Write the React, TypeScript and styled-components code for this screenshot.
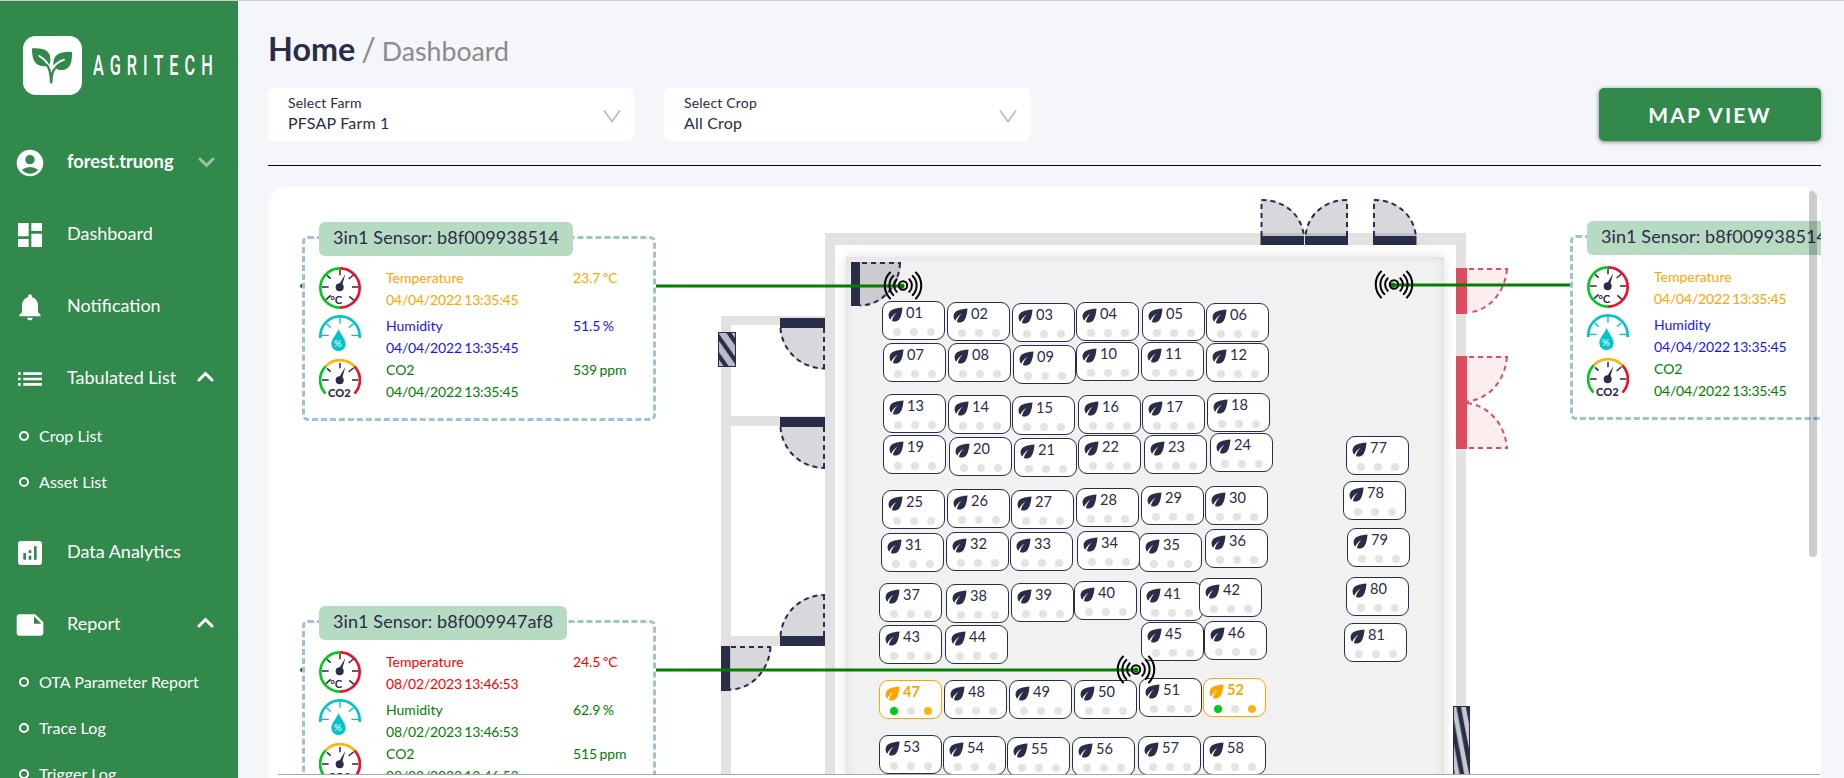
import React from "react";
import styled, { createGlobalStyle } from "styled-components";
import {
  MdAccountCircle,
  MdAnalytics,
  MdDashboard,
  MdEco,
  MdList,
  MdNote,
  MdNotifications,
} from "react-icons/md";

const green = "#31894b";
const navy = "#292d47";
const red = "#de4d5f";

const GlobalStyle = createGlobalStyle`
  *, *::before, *::after { box-sizing: border-box; }
  body {
    margin: 0;
    background: #f4f6fa;
    color: ${navy};
    font-family: Lato, "Liberation Sans", sans-serif;
    overflow: hidden;
  }
`;

const Page = styled.div`
  display: flex;
  height: 778px;
  border-top: 1px solid #cccccc;
  overflow: hidden;
`;

/* ---------- sidebar ---------- */

const Sidebar = styled.nav`
  flex: 0 0 238px;
  background: ${green};
  color: #fff;
  overflow: hidden;
`;

const Brand = styled.div`
  display: flex;
  align-items: center;
  height: 124px;
  padding: 5px 0 0 23px;
  gap: 11px;
`;

const BrandName = styled.span`
  width: 125px;
  font: 500 28px/32px Roboto, sans-serif;
  letter-spacing: 10.4px;
  white-space: nowrap;
  transform: scaleX(0.58);
  transform-origin: left center;
`;

const NavItem = styled.div<{ $bold?: boolean }>`
  display: flex;
  align-items: center;
  height: 72px;
  padding: 0 23px 0 14px;
  font-size: ${(p) => (p.$bold ? "18.25px" : "18px")};
  font-weight: ${(p) => (p.$bold ? 700 : 400)};

  > svg:first-child {
    flex: none;
    margin: 4px 21px 0 0;
  }
`;

const NavLabel = styled.span`
  flex: 1;
  white-space: nowrap;
`;

const NavChevron = styled.svg<{ $up?: boolean }>`
  margin: ${(p) => (p.$up ? "-2px 1px 0 0" : "2px 0 0 0")};
`;

const SubList = styled.div`
  padding-bottom: 10px;
`;

const SubItem = styled.div`
  display: flex;
  align-items: center;
  gap: 10px;
  height: 46px;
  padding: 0 0 2px 19px;
  font-size: 16.1px;
  white-space: nowrap;
`;

const Bullet = styled.span`
  width: 10px;
  height: 10px;
  margin-top: 2px;
  border: 2.5px solid #fff;
  border-radius: 50%;
`;

/* ---------- main column ---------- */

const Main = styled.main`
  flex: 1;
  min-width: 0;
  display: flex;
  flex-direction: column;
  padding: 0 23px 0 30px;
`;

const Title = styled.h1`
  display: flex;
  align-items: baseline;
  margin: 0;
  height: 87px;
  padding-top: 28px;
  font-size: 32.3px;
  line-height: 40px;
  font-weight: 700;
`;

const Slash = styled.span`
  margin: 0 6px 0 6px;
  font-weight: 400;
  color: #8b8b8b;
`;

const Crumb = styled.span`
  font-size: 26.700px;
  font-weight: 400;
  color: #8b8b8b;
`;

const Toolbar = styled.div`
  display: flex;
  gap: 30px;
  height: 78px;
  padding-bottom: 24px;
  border-bottom: 1px solid #000;
`;

const Select = styled.div`
  display: flex;
  align-items: center;
  justify-content: space-between;
  width: 366px;
  padding: 0 13px 0 20px;
  border-radius: 6px;
  background: #fff;
`;

const SelectText = styled.div`
  display: flex;
  flex-direction: column;
  padding-bottom: 3px;
  letter-spacing: 0.2px;
`;

const SelectLabel = styled.span`
  font-size: 14px;
  line-height: 20px;
`;

const SelectValue = styled.span`
  font-size: 16px;
  line-height: 20px;
`;

const MapButton = styled.button`
  width: 222px;
  margin-left: auto;
  padding: 0;
  border: 0;
  border-radius: 5px;
  background: ${green};
  color: #fff;
  font: 700 21px/53px Lato, sans-serif;
  letter-spacing: 2.2px;
  box-shadow: 0 1px 4px rgba(0, 0, 0, 0.5);
`;

const Panel = styled.section`
  flex: 1;
  min-height: 0;
  display: flex;
  flex-direction: column;
  margin-top: 20px;
  padding-bottom: 3px;
  border-radius: 22px 22px 0 0;
  background: #fff;
  overflow: hidden;
  position: relative;
`;

const MapView = styled.div`
  position: relative;
  flex: 1;
  overflow: hidden;
`;

const BottomRule = styled.div`
  height: 1px;
  margin: 0 1px 0 10px;
  background: #a8a8a8;
`;

const ScrollThumb = styled.div`
  position: absolute;
  top: 4px;
  right: 4px;
  width: 8px;
  height: 367px;
  border-radius: 4px;
  background: rgba(0, 0, 0, 0.2);
`;

const Layer = styled.svg`
  position: absolute;
  inset: 0;
`;

const Room = styled.div`
  position: absolute;
  left: 578px;
  top: 71px;
  width: 598px;
  height: 700px;
  background: #f1f1f1;
  box-shadow: 0 0 12px rgba(0, 0, 0, 0.12), inset 0 0 10px rgba(0, 0, 0, 0.1);
`;

const Pin = styled.div<{ $x: number; $y: number; $alert?: boolean }>`
  position: absolute;
  left: ${(p) => p.$x}px;
  top: ${(p) => p.$y}px;
  width: 63px;
  height: 39px;
  padding: 2px 0 0 2px;
  border: 1px solid ${(p) => (p.$alert ? "#ffa500" : navy)};
  border-radius: 9px;
  background: #fff;
  color: ${(p) => (p.$alert ? "#ffa500" : navy)};
  font-size: 14.600px;
  font-weight: ${(p) => (p.$alert ? 700 : 400)};
`;

const PinHead = styled.div`
  display: flex;
  align-items: center;
  height: 20px;
  line-height: 16px;

  > svg {
    margin: 1px 0 0 0;
  }
`;

const PinNumber = styled.span`
  height: 19px;
`;

const Dots = styled.div`
  display: flex;
  gap: 9px;
  padding: 4px 0 0 8px;
`;

const Dot = styled.span<{ $color: string }>`
  width: 8px;
  height: 8px;
  border-radius: 50%;
  background: ${(p) => p.$color};
`;

/* ---------- sensor card ---------- */

const Card = styled.article<{ $x: number; $y: number }>`
  position: absolute;
  left: ${(p) => p.$x}px;
  top: ${(p) => p.$y}px;
  width: 354px;
  height: 185px;
  padding: 28px 0 0 14px;
  border: 3px dashed #9fc1d1;
  border-radius: 6px;
  background: #fff;
`;

const Badge = styled.div`
  position: absolute;
  top: -17px;
  left: 14px;
  height: 34px;
  padding: 0 14px;
  border-radius: 6px;
  background: #b7dac2;
  font-size: 18px;
  letter-spacing: 0.1px;
  line-height: 30px;
  white-space: nowrap;
`;

const Reading = styled.div<{ $color: string; $height: number }>`
  display: grid;
  grid-template-columns: 67px 187px auto;
  align-items: start;
  height: ${(p) => p.$height}px;
  color: ${(p) => p.$color};
  font-size: 14px;
  line-height: 22px;
  word-spacing: -1px;
  white-space: nowrap;
`;

const ReadingName = styled.div`
  display: flex;
  flex-direction: column;
`;

const ReadingTime = styled.span`
  letter-spacing: -0.18px;
`;

const ReadingValue = styled.span`
  letter-spacing: -0.12px;
`;

/* ---------- drawings ---------- */

function Logo() {
  return (
    <svg width="59" height="59" viewBox="69 108 177 177">
      <rect x="69" y="108" width="177" height="177" rx="38" fill="#fff" />
      <g fill={green}>
        <path d="M96 145C132 142 153 152 151 182C150 190 149 196 145 198C108 203 96 186 96 145Z" />
        <path d="M216 156C184 153 160 163 160 190C160 208 176 213 193 209C214 203 216 182 216 156Z" />
      </g>
      <g fill="none" strokeLinecap="round">
        <path d="M118 168Q142 182 153 210M192 179Q167 188 157 207" stroke="#fff" strokeWidth="6" />
        <path d="M141 196Q152 208 153 247M164 207Q155 214 154 247" stroke={green} strokeWidth="7" />
      </g>
    </svg>
  );
}

function Chevron({ up }: { up?: boolean }) {
  return (
    <NavChevron $up={up} width="17" height="11" viewBox="0 0 17 11">
      <path
        d={up ? "M2 9L8.5 2.5L15 9" : "M2 2L8.5 8.5L15 2"}
        fill="none"
        stroke="#fff"
        strokeOpacity={up ? 1 : 0.5}
        strokeWidth="3"
        strokeLinecap="round"
      />
    </NavChevron>
  );
}

const ArrowDrawing = styled.svg`
  margin-top: 3px;
`;

function SelectArrow() {
  return (
    <ArrowDrawing width="18" height="13" viewBox="0 0 18 13">
      <path d="M1 0.5L9 11.5L17 0.5" fill="none" stroke="#bdbdbd" strokeWidth="1.8" />
    </ArrowDrawing>
  );
}

function GaugeTicks() {
  return (
    <g>
      <path
        d="M150 210V226M96 261H116M186 261H205M111 226L122 236M190 225L176 237"
        stroke={navy}
        strokeWidth="4.5"
        fill="none"
      />
      <circle cx="149" cy="262" r="12" fill={navy} />
      <path d="M144 259L166 222L154 264Z" fill={navy} />
    </g>
  );
}

function TemperatureIcon() {
  return (
    <svg width="42" height="42" viewBox="87 201 126 126">
      <path d="M150 205A59 59 0 0 0 150 323" fill="none" stroke="#00c81e" strokeWidth="8" />
      <path d="M150 205A59 59 0 0 1 150 323" fill="none" stroke="#f00f28" strokeWidth="8" />
      <GaugeTicks />
      <path d="M108 299L122 286M178 289L192 301" stroke={navy} strokeWidth="4.5" />
      <text x="121" y="311" fontSize="34" fontWeight="700" fill={navy}>
        °
      </text>
      <text x="134" y="311" fontSize="34" fontWeight="700" fill={navy}>
        C
      </text>
    </svg>
  );
}

function HumidityIcon() {
  return (
    <svg width="42" height="37" viewBox="87 345 126 111">
      <g fill="none" stroke="#00c4c8">
        <path d="M91 414V408A59 59 0 0 1 209 408V414" strokeWidth="8" />
        <path d="M150 352V371M94 406H116M184 406H206M110 371L122 383M190 371L177 383" strokeWidth="4" />
      </g>
      <path d="M146 387C153 405 167 418 167 432A21.500 21.500 0 0 1 124 432C124 418 138 405 146 387Z" fill="#00c4c8" />
      <text x="131" y="441" fontSize="30" fill="#fff">
        %
      </text>
    </svg>
  );
}

function Co2Icon() {
  return (
    <svg width="42" height="40" viewBox="87 477 126 120">
      <g fill="none" strokeWidth="8" strokeLinecap="round">
        <path d="M104 578A59 59 0 0 1 107 499" stroke="#00c81e" />
        <path d="M196 578A59 59 0 0 0 193 499" stroke="#f00f28" />
        <path d="M107 499A59 59 0 0 1 193 499" stroke="#fab414" strokeLinecap="butt" />
      </g>
      <g transform="translate(0 279)">
        <GaugeTicks />
      </g>
      <text x="114" y="592" fontSize="33" fontWeight="900" fill={navy} textLength="68" lengthAdjust="spacingAndGlyphs">
        CO2
      </text>
    </svg>
  );
}

function Door({ area, dash, bar, color = navy }: { area: string; dash: string; bar: number[]; color?: string }) {
  const [x, y, w, h] = bar;
  return (
    <g>
      <path d={area} fill={color} fillOpacity={color === red ? 0.1 : 0.19} />
      <path d={dash} fill="none" stroke={color} strokeWidth="2" strokeDasharray="5 4" />
      <rect x={x} y={y} width={w} height={h} fill={color} />
    </g>
  );
}

function Walls() {
  return (
    <Layer width="1553" height="588" viewBox="268 186 1553 588">
      <path
        d="M721 774V316H825V325H731V416H825V426H731V636H825V646H731V774ZM825 774V233H1466V774H1456V245H835V774Z"
        fill="#e2e2e2"
      />
    </Layer>
  );
}

function Doors() {
  return (
    <Layer width="1553" height="588" viewBox="268 186 1553 588">
      <defs>
        <pattern id="hatch" width="13" height="18.500" patternUnits="userSpaceOnUse" x="718" y="336">
          <rect width="13" height="18.500" fill="#b9bac5" />
          <path d="M-6.500 -9.250L19.500 27.750M-6.500 9.250L6.500 27.750M6.500 -9.250L19.500 9.250" stroke={navy} strokeWidth="4.200" />
        </pattern>
        <pattern id="hatchTall" width="9.500" height="50" patternUnits="userSpaceOnUse" x="1458.500" y="706">
          <rect width="9.500" height="50" fill="#c6c7d0" />
          <path d="M-9.500 -50L19 100M-9.500 0L9.500 100M0 -50L19 50" stroke={navy} strokeWidth="4.600" />
        </pattern>
      </defs>

      <Door area="M780 328C781 350 799 369 825 369V328Z" dash="M824 328V369M780.500 328C782 350 800 368.500 825 368.500" bar={[780, 318, 45, 10]} />
      <Door area="M780 427C781 449 799 469 825 469V427Z" dash="M824 427V468M780.500 427C782 449 800 468 825 468" bar={[780, 417, 45, 10]} />
      <Door area="M780 636C781 614 799 594 825 594V636Z" dash="M824 636V595M780.500 636C782 614 800 595 825 595" bar={[780, 636, 45, 10]} />
      <Door area="M730 646H771C771 670 754 690 730 690Z" dash="M731 647H771M770.500 647C769 670 752 689 730 689.500" bar={[721, 646, 9, 45]} />
      <Door area="M860 262H901C901 286 884 306 860 306Z" dash="M862 263H901M900 263C899 286 882 305 860 305.500" bar={[851, 262, 9, 44]} />

      <Door area="M1261 199C1285 199 1303 214 1304 236H1261Z" dash="M1261.500 236V200C1285 200 1303 216 1304 238" bar={[1260.500, 236, 43.500, 9]} />
      <Door area="M1348 199C1324 199 1306 214 1305 236H1348Z" dash="M1347 236V200C1324 200 1306 216 1305.500 238" bar={[1305, 236, 43, 9]} />
      <Door area="M1373 199C1397 199 1415 214 1416 236H1373Z" dash="M1374 236V200C1397 200 1415 216 1416 238" bar={[1373, 236, 43.500, 9]} />

      <Door color={red} area="M1467 268H1508C1506 292 1490 311 1467 313Z" dash="M1469 269H1508M1507 269C1505 292 1490 310 1469 312.500" bar={[1456, 268, 11, 46]} />
      <Door color={red} area="M1467 356H1508C1506 380 1490 399 1467 401V404C1490 406 1506 425 1508 449H1467Z" dash="M1469 357H1508M1507 357C1505 380 1490 399 1467 401.500M1467 403C1490 406 1505 425 1507 448M1469 448H1508" bar={[1456, 356, 11, 93]} />

      <rect x="718.500" y="332.500" width="17" height="34" fill="url(#hatch)" stroke={navy} />
      <rect x="1453.500" y="706.500" width="16" height="90" fill="url(#hatchTall)" stroke={navy} />
    </Layer>
  );
}

function Antenna({ x, y }: { x: number; y: number }) {
  const arc = (r: number) => {
    const d = r * 0.7;
    return `M${d} ${-d}A${r} ${r} 0 0 1 ${d} ${d}M${-d} ${-d}A${r} ${r} 0 0 0 ${-d} ${d}`;
  };
  return (
    <g transform={`translate(${x} ${y})`} fill="none" stroke="#000" strokeWidth="2" strokeLinecap="round">
      <circle r="4.200" />
      <path d={[9, 13.8, 18.5].map(arc).join("")} />
    </g>
  );
}

function Links() {
  return (
    <Layer width="1553" height="588" viewBox="268 186 1553 588">
      <path d="M302 286H902M302 670H1136M1394 285H1570" stroke="green" strokeWidth="2.800" strokeLinecap="round" />
      <g fill="green">
        <circle cx="302" cy="286" r="2" />
        <circle cx="302" cy="670" r="2" />
        <circle cx="902" cy="286" r="2.500" />
        <circle cx="1136" cy="670" r="2.500" />
        <circle cx="1393" cy="285" r="2.500" />
      </g>
      <Antenna x={903} y={285.5} />
      <Antenna x={1136} y={669.5} />
      <Antenna x={1394} y={284.5} />
    </Layer>
  );
}

/* ---------- data ---------- */

const pins: [string, number, number][] = [
  ["01", 614, 115], ["02", 679, 116], ["03", 744, 117], ["04", 808, 116], ["05", 874, 116], ["06", 938, 117],
  ["07", 615, 157], ["08", 680, 157], ["09", 745, 159], ["10", 808, 156], ["11", 873, 156], ["12", 938, 157],
  ["13", 615, 208], ["14", 680, 209], ["15", 744, 210], ["16", 810, 209], ["17", 874, 209], ["18", 939, 207],
  ["19", 615, 249], ["20", 681, 251], ["21", 746, 252], ["22", 810, 249], ["23", 876, 249], ["24", 942, 247],
  ["25", 614, 304], ["26", 679, 303], ["27", 743, 304], ["28", 808, 302], ["29", 873, 300], ["30", 937, 300],
  ["31", 613, 347], ["32", 678, 346], ["33", 742, 346], ["34", 809, 345], ["35", 871, 347], ["36", 937, 343],
  ["37", 611, 397], ["38", 678, 398], ["39", 743, 397], ["40", 806, 395], ["41", 872, 396], ["42", 931, 392],
  ["43", 611, 439], ["44", 677, 439], ["45", 873, 436], ["46", 936, 435],
  ["47", 611, 494], ["48", 676, 494], ["49", 741, 494], ["50", 806, 494], ["51", 871, 492], ["52", 935, 492],
  ["53", 611, 549], ["54", 675, 550], ["55", 739, 551], ["56", 804, 551], ["57", 870, 550], ["58", 935, 550],
  ["77", 1078, 250], ["78", 1075, 295], ["79", 1079, 342], ["80", 1078, 391], ["81", 1076, 437],
];

const alerts = ["47", "52"];
const idleDots = ["#e2e3e5", "#e2e3e5", "#e2e3e5"];
const alertDots = ["#00c81e", "#e2e3e5", "#fab414"];

interface Sensor {
  x: number;
  y: number;
  id: string;
  time: string;
  values: [string, string, string];
  colors: [string, string, string];
}

const sensors: Sensor[] = [
  { x: 34, y: 50, id: "b8f009938514", time: "04/04/2022 13:35:45", values: ["23.7 ºC", "51.5 %", "539 ppm"], colors: ["orange", "#1414ff", "green"] },
  { x: 34, y: 434, id: "b8f009947af8", time: "08/02/2023 13:46:53", values: ["24.5 ºC", "62.9 %", "515 ppm"], colors: ["red", "green", "green"] },
  { x: 1302, y: 49, id: "b8f009938514", time: "04/04/2022 13:35:45", values: ["23.7 ºC", "51.5 %", "539 ppm"], colors: ["orange", "#1414ff", "green"] },
];

const readings = [
  { name: "Temperature", height: 48, icon: <TemperatureIcon /> },
  { name: "Humidity", height: 44, icon: <HumidityIcon /> },
  { name: "CO2", height: 44, icon: <Co2Icon /> },
];

function CropPin({ label, x, y }: { label: string; x: number; y: number }) {
  const alert = alerts.includes(label);
  return (
    <Pin $x={x} $y={y} $alert={alert}>
      <PinHead>
        <MdEco size={21} />
        <PinNumber>{label}</PinNumber>
      </PinHead>
      <Dots>
        {(alert ? alertDots : idleDots).map((c, i) => (
          <Dot key={i} $color={c} />
        ))}
      </Dots>
    </Pin>
  );
}

function SensorCard({ sensor }: { sensor: Sensor }) {
  return (
    <Card $x={sensor.x} $y={sensor.y}>
      <Badge>3in1 Sensor: {sensor.id}</Badge>
      {readings.map((r, i) => (
        <Reading key={r.name} $color={sensor.colors[i]} $height={r.height}>
          {r.icon}
          <ReadingName>
            <span>{r.name}</span>
            <ReadingTime>{sensor.time}</ReadingTime>
          </ReadingName>
          <ReadingValue>{sensor.values[i]}</ReadingValue>
        </Reading>
      ))}
    </Card>
  );
}

function SubEntries({ items }: { items: string[] }) {
  return (
    <SubList>
      {items.map((item) => (
        <SubItem key={item}>
          <Bullet />
          {item}
        </SubItem>
      ))}
    </SubList>
  );
}

export default function App() {
  return (
    <>
      <GlobalStyle />
      <Page>
        <Sidebar>
          <Brand>
            <Logo />
            <BrandName>AGRITECH</BrandName>
          </Brand>
          <NavItem $bold>
            <MdAccountCircle size={32} />
            <NavLabel>forest.truong</NavLabel>
            <Chevron />
          </NavItem>
          <NavItem>
            <MdDashboard size={32} />
            <NavLabel>Dashboard</NavLabel>
          </NavItem>
          <NavItem>
            <MdNotifications size={32} />
            <NavLabel>Notification</NavLabel>
          </NavItem>
          <NavItem>
            <MdList size={32} />
            <NavLabel>Tabulated List</NavLabel>
            <Chevron up />
          </NavItem>
          <SubEntries items={["Crop List", "Asset List"]} />
          <NavItem>
            <MdAnalytics size={32} />
            <NavLabel>Data Analytics</NavLabel>
          </NavItem>
          <NavItem>
            <MdNote size={32} />
            <NavLabel>Report</NavLabel>
            <Chevron up />
          </NavItem>
          <SubEntries items={["OTA Parameter Report", "Trace Log", "Trigger Log"]} />
        </Sidebar>

        <Main>
          <Title>
            Home<Slash>/</Slash>
            <Crumb>Dashboard</Crumb>
          </Title>
          <Toolbar>
            <Select>
              <SelectText>
                <SelectLabel>Select Farm</SelectLabel>
                <SelectValue>PFSAP Farm 1</SelectValue>
              </SelectText>
              <SelectArrow />
            </Select>
            <Select>
              <SelectText>
                <SelectLabel>Select Crop</SelectLabel>
                <SelectValue>All Crop</SelectValue>
              </SelectText>
              <SelectArrow />
            </Select>
            <MapButton>MAP VIEW</MapButton>
          </Toolbar>
          <Panel>
            <MapView>
              <Walls />
              <Room />
              <Doors />
              {pins.map(([label, x, y]) => (
                <CropPin key={label} label={label} x={x} y={y} />
              ))}
              <Links />
              {sensors.map((s, i) => (
                <SensorCard key={i} sensor={s} />
              ))}
            </MapView>
            <BottomRule />
            <ScrollThumb />
          </Panel>
        </Main>
      </Page>
    </>
  );
}
